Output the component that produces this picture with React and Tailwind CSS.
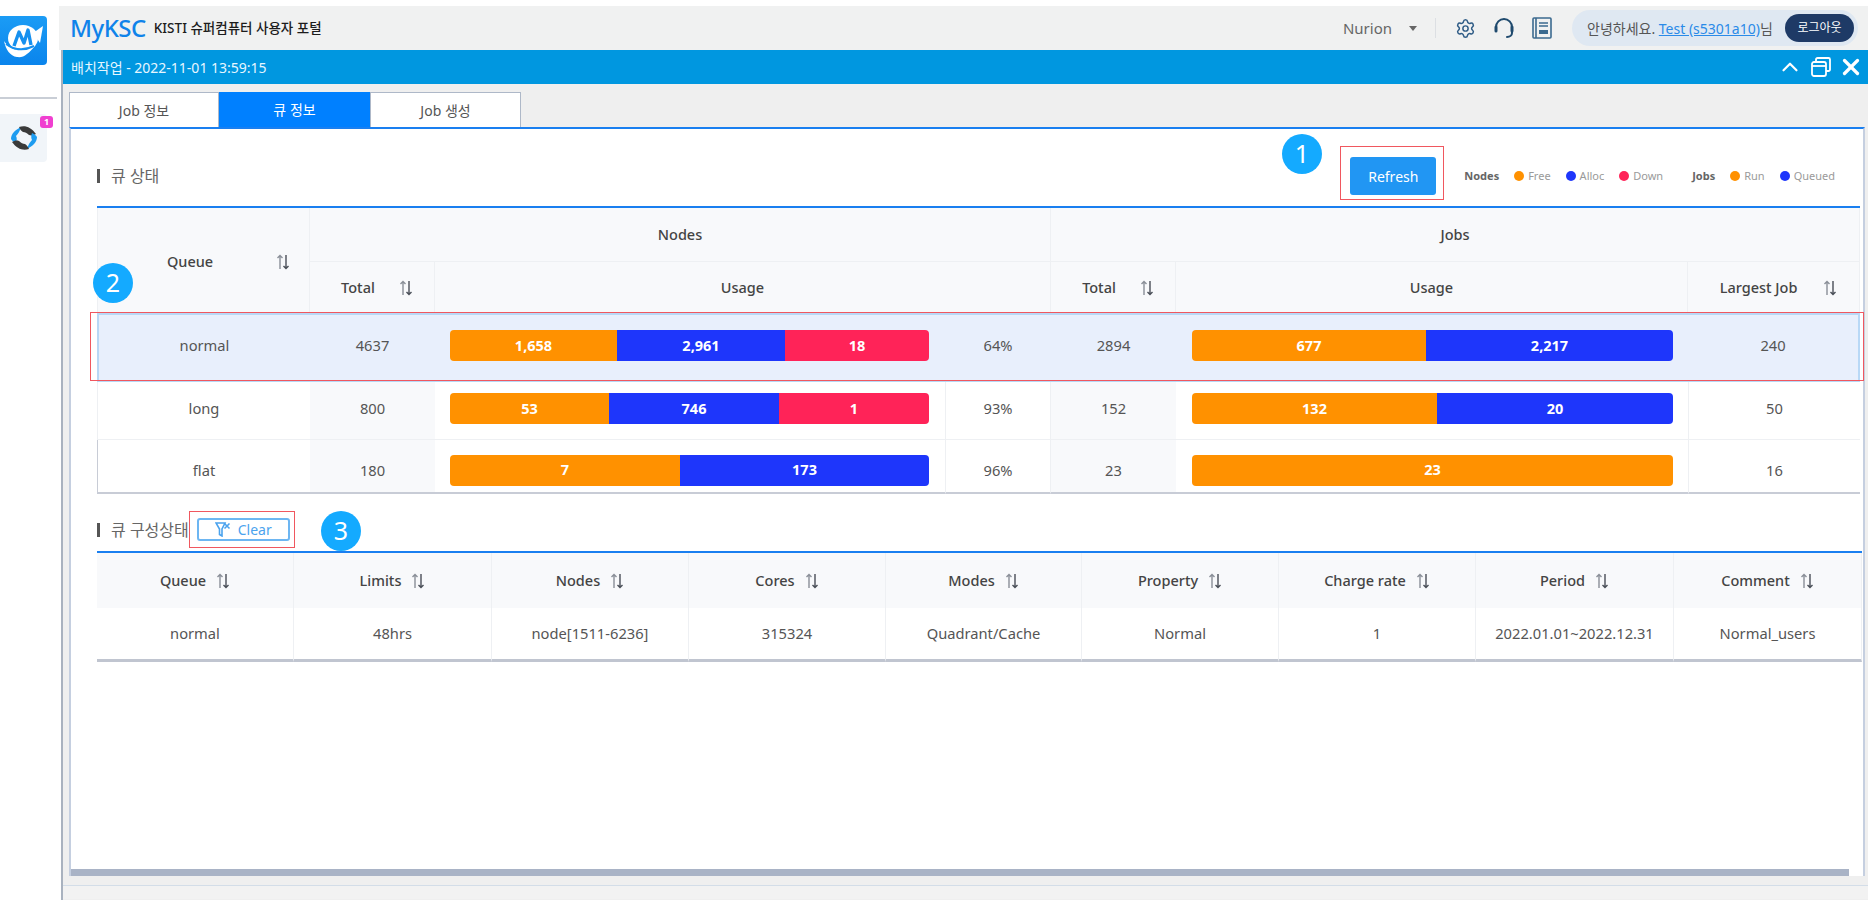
import { ChevronUp, X, Settings } from 'lucide-react'

const FONT = "font-['Noto_Sans','Noto_Sans_CJK_KR',sans-serif]"

const ORANGE = 'bg-[#ff9100]'
const BLUE = 'bg-[#1e36fb]'
const RED = 'bg-[#ff2358]'

const queues = [
  {
    name: 'normal', total: 4637, pct: '64%', jobs: 2894, largest: 240, selected: true,
    nodes: [['1,658', 167, ORANGE], ['2,961', 168, BLUE], ['18', 144, RED]],
    jobBars: [['677', 234, ORANGE], ['2,217', 247, BLUE]],
  },
  {
    name: 'long', total: 800, pct: '93%', jobs: 152, largest: 50,
    nodes: [['53', 159, ORANGE], ['746', 170, BLUE], ['1', 150, RED]],
    jobBars: [['132', 245, ORANGE], ['20', 236, BLUE]],
  },
  {
    name: 'flat', total: 180, pct: '96%', jobs: 23, largest: 16,
    nodes: [['7', 230, ORANGE], ['173', 249, BLUE]],
    jobBars: [['23', 481, ORANGE]],
  },
]

const configCols = ['Queue', 'Limits', 'Nodes', 'Cores', 'Modes', 'Property', 'Charge rate', 'Period', 'Comment']
const configRow = ['normal', '48hrs', 'node[1511-6236]', '315324', 'Quadrant/Cache', 'Normal', '1', '2022.01.01~2022.12.31', 'Normal_users']

function SortIcon({ className = '' }) {
  return (
    <svg width="14" height="16" viewBox="0 0 14 16" fill="none" strokeWidth="1.4" className={`inline-block ${className}`}>
      <path d="M4 15V1.5M1.5 4L4 1.5 6.5 4" stroke="#8a8f98" />
      <path d="M10 1v13.5M7.5 12l2.5 2.5 2.5-2.5" stroke="#4a4f58" />
    </svg>
  )
}

function Logo() {
  return (
    <div className="w-[47px] h-[49px] rounded-r-[4px] bg-gradient-to-b from-[#1b9cf5] to-[#0a84ec] flex items-center justify-center">
      <svg width="40" height="34" viewBox="0 0 40 34">
        <ellipse cx="19" cy="14" rx="15" ry="13" fill="#fff" />
        <path d="M29 9l10-7-3 17z" fill="#fff" />
        <path d="M10 22l5-14 5 11 4-13 3 15" fill="none" stroke="#1690ef" strokeWidth="3.4" strokeLinejoin="round" />
        <path d="M0 17c6 10 20 13 32 4-8 9-12 13-19 12C6 32 2 26 0 17z" fill="#fff" />
        <path d="M2 20c8 6 18 7 28 2" fill="none" stroke="#1690ef" strokeWidth="2" />
      </svg>
    </div>
  )
}

function TileIcon() {
  return (
    <svg width="28" height="28" viewBox="0 0 28 28">
      <path d="M1 15C1 10 5 6 11 3c-1 4-3 7-5 9 1 2 1 4 0 7-2-1-4-2-5-4z" fill="#1e9cf0" />
      <path d="M9 3c6-2 12 0 17 7-2 1-4 2-7 1-2-2-4-3-6-3-2-1-3-3-4-5z" fill="#3a3a3a" />
      <path d="M27 13c0 5-4 9-10 12 1-4 3-7 5-9-1-2-1-4 0-7 2 1 4 2 5 4z" fill="#1e9cf0" />
      <path d="M19 25c-6 2-12 0-17-7 2-1 4-2 7-1 2 2 4 3 6 3 2 1 3 3 4 5z" fill="#3a3a3a" />
    </svg>
  )
}

function Sidebar() {
  return (
    <aside className="w-[59px] shrink-0 pt-[16px]">
      <Logo />
      <div className="h-[2px] w-[57px] mt-[32px] bg-[#c9ced6]" />
      <div className="relative w-[47px] h-[48px] mt-[15px] bg-[#f1f5f9] rounded-r-[4px] flex items-center justify-center">
        <TileIcon />
        <span className="absolute top-[2px] right-[-6px] w-[13px] h-[12px] rounded-[3px] bg-[#f03fd0] text-white text-[9px] leading-[12px] text-center font-bold">1</span>
      </div>
    </aside>
  )
}

function Header() {
  return (
    <header className="h-[44px] bg-[#f0f1f1] flex items-center pl-[11px] pr-[10px]">
      <span className="text-[#0f83ea] text-[24px] font-medium tracking-[-0.5px] leading-none">MyKSC</span>
      <span className="ml-[8px] text-[13.5px] font-medium text-[#1c1c1c]">KISTI 슈퍼컴퓨터 사용자 포털</span>
      <div className="ml-auto flex items-center">
        <span className="text-[15px] text-[#666]">Nurion</span>
        <svg width="8" height="5" viewBox="0 0 8 5" className="ml-[17px]"><path d="M0 0h8L4 5z" fill="#666" /></svg>
        <span className="w-px h-[20px] bg-[#dcdfe3] ml-[18px]" />
        <Settings size={21} strokeWidth={1.7} className="ml-[19px] text-[#2f5c86]" />
        <svg width="22" height="22" viewBox="0 0 22 22" fill="none" className="ml-[17px]" stroke="#1f4a6e" strokeWidth="2" strokeLinecap="round">
          <path d="M3 14V10a8 8 0 0116 0v6c0 2-2 4-5 4" />
          <path d="M3 10v4" strokeWidth="3" />
          <path d="M19 10v4" strokeWidth="3" />
        </svg>
        <svg width="20" height="22" viewBox="0 0 20 22" fill="none" className="ml-[17px]" stroke="#3b6a8f" strokeWidth="1.6">
          <rect x="1" y="1" width="18" height="20" rx="1" />
          <path d="M4 1v20" />
          <path d="M7 6h9M7 9h9" />
          <rect x="7" y="13" width="9" height="4" fill="#3b6a8f" stroke="none" />
        </svg>
        <div className="ml-[20px] w-[286px] h-[36px] rounded-full bg-[#dfe8f2] flex items-center pl-[15px] pr-[4px] text-[14px] text-[#555]">
          <span>안녕하세요.&nbsp;</span>
          <span className="text-[#2a8ae8] underline">Test (s5301a10)</span>
          <span>님</span>
          <button className="ml-auto w-[69px] h-[28px] rounded-full bg-[#1e3a66] text-white text-[12px]">로그아웃</button>
        </div>
      </div>
    </header>
  )
}

function TitleBar() {
  return (
    <div className="h-[34px] bg-[#0097e0] flex items-center pl-[8px] pr-[4px] text-white">
      <span className="text-[14px] text-[#e6f6ff]">배치작업 - 2022-11-01 13:59:15</span>
      <div className="ml-auto flex items-center">
        <ChevronUp size={26} strokeWidth={2} />
        <svg width="20" height="20" viewBox="0 0 20 20" fill="none" stroke="#fff" strokeWidth="1.8" className="ml-[8px]">
          <rect x="1" y="5" width="14" height="14" rx="2" />
          <path d="M5 5V2.5A1.5 1.5 0 016.5 1h11A1.5 1.5 0 0119 2.5v10a1.5 1.5 0 01-1.5 1.5H15" />
          <path d="M1 9h14" />
        </svg>
        <X size={26} strokeWidth={3} className="ml-[7px]" />
      </div>
    </div>
  )
}

function Tabs() {
  return (
    <div className="flex ml-[6px] mt-[8px] h-[35px]">
      <div className="w-[150px] bg-white border border-b-0 border-[#aeb8c8] text-[14px] text-[#555] flex items-center justify-center">Job 정보</div>
      <div className="w-[151px] bg-[#0080ff] text-[14px] text-white flex items-center justify-center">큐 정보</div>
      <div className="w-[151px] bg-white border border-b-0 border-[#aeb8c8] text-[14px] text-[#555] flex items-center justify-center">Job 생성</div>
    </div>
  )
}

function SectionTitle({ children }) {
  return (
    <div className="flex items-center">
      <span className="w-[3px] h-[14px] bg-[#555]" />
      <span className="ml-[11px] text-[16px] text-[#666]">{children}</span>
    </div>
  )
}

function Legend({ color, label }) {
  return (
    <span className="flex items-center ml-[15px]">
      <span className={`w-[10px] h-[10px] rounded-full ${color}`} />
      <span className="ml-[4px] text-[11px] text-[#9a9a9a]">{label}</span>
    </span>
  )
}

function Bar({ segments }) {
  return (
    <div className="flex h-[31px] rounded-[4px] overflow-hidden">
      {segments.map(([label, width, color]) => (
        <div key={label + width} style={{ width }} className={`${color} text-white font-bold text-[14.5px] flex items-center justify-center`}>
          {label}
        </div>
      ))}
    </div>
  )
}

function QueueTable() {
  const th = 'bg-[#f8f9fb] border-r border-b border-[#eef0f3] text-[14.5px] font-medium text-[#444]'
  return (
    <table className="table-fixed border-separate border-spacing-0 w-[1763px] border-t-2 border-[#1a7ff0]">
      <colgroup>
        <col className="w-[213px]" />
        <col className="w-[125px]" />
        <col className="w-[510px]" />
        <col className="w-[106px]" />
        <col className="w-[125px]" />
        <col className="w-[512px]" />
        <col className="w-[172px]" />
      </colgroup>
      <thead>
        <tr className="h-[54px]">
          <th rowSpan={2} className={`${th} border-l pt-[3px]`}>
            <div className="flex items-center pl-[69px]">
              <span>Queue</span>
              <SortIcon className="ml-[63px]" />
            </div>
          </th>
          <th colSpan={3} className={th}>Nodes</th>
          <th colSpan={3} className={th}>Jobs</th>
        </tr>
        <tr className="h-[51px]">
          <th className={`${th} pl-[10px] pt-[2px]`}>Total<SortIcon className="ml-[24px] align-[-3px]" /></th>
          <th colSpan={2} className={`${th} pt-[2px]`}>Usage</th>
          <th className={`${th} pl-[10px] pt-[2px]`}>Total<SortIcon className="ml-[24px] align-[-3px]" /></th>
          <th className={`${th} pt-[2px]`}>Usage</th>
          <th className={`${th} pl-[10px] pt-[2px]`}>Largest Job<SortIcon className="ml-[26px] align-[-3px]" /></th>
        </tr>
      </thead>
      <tbody className="text-[14.7px] text-[#555] text-center">
        {queues.map((q) => {
          const last = q.name === 'flat'
          const rowCell = q.selected
            ? 'bg-[#e8effc] border-y-2 border-[#b8d8f6] pb-[4px]'
            : last
              ? 'border-b-2 border-[#c8ccd6] pt-[8px]'
              : 'border-b border-[#eef0f3] pb-[4px]'
          const shade = q.selected ? '' : 'bg-[#f8f9fb]'
          const height = q.selected ? 'h-[69px]' : last ? 'h-[54px]' : 'h-[58px]'
          return (
            <tr key={q.name} className={height}>
              <td className={`${rowCell} ${q.selected ? 'border-l-2' : 'border-l'}`}>{q.name}</td>
              <td className={`${rowCell} ${shade}`}>{q.total}</td>
              <td className={`${rowCell} pl-[15px] pr-[16px]`}><Bar segments={q.nodes} /></td>
              <td className={`${rowCell} ${q.selected ? '' : 'border-x border-x-[#eef0f3]'}`}>{q.pct}</td>
              <td className={`${rowCell} ${shade}`}>{q.jobs}</td>
              <td className={`${rowCell} pl-[16px] pr-[15px]`}><Bar segments={q.jobBars} /></td>
              <td className={`${rowCell} ${q.selected ? 'border-r-2' : 'border-l border-l-[#eef0f3]'}`}>{q.largest}</td>
            </tr>
          )
        })}
      </tbody>
    </table>
  )
}

function ConfigTable() {
  return (
    <table className="table-fixed border-separate border-spacing-0 w-[1765px] border-t-2 border-[#1a7ff0]">
      <colgroup>
        <col className="w-[197px]" />
        <col className="w-[198px]" />
        <col className="w-[197px]" />
        <col className="w-[197px]" />
        <col className="w-[196px]" />
        <col className="w-[197px]" />
        <col className="w-[197px]" />
        <col className="w-[198px]" />
        <col className="w-[188px]" />
      </colgroup>
      <thead>
        <tr className="h-[55px]">
          {configCols.map((c) => (
            <th key={c} className="bg-[#f8f9fb] border-r border-[#eef0f3] text-[14.5px] font-medium text-[#444]">
              {c}<SortIcon className="ml-[10px] align-[-3px]" />
            </th>
          ))}
        </tr>
      </thead>
      <tbody>
        <tr className="h-[54px]">
          {configRow.map((v) => (
            <td key={v} className="border-r border-b-[3px] border-r-[#eef0f3] border-b-[#c0c5d0] text-center text-[14.7px] text-[#555]">{v}</td>
          ))}
        </tr>
      </tbody>
    </table>
  )
}

function Callout({ className, children }) {
  return (
    <div className={`absolute w-[40px] h-[40px] rounded-full bg-[#14aaff] text-white text-[25px] flex items-center justify-center ${className}`}>
      {children}
    </div>
  )
}

export default function App() {
  return (
    <div className={`relative w-[1876px] h-[900px] overflow-hidden bg-white flex ${FONT}`}>
      <Sidebar />
      <main className="w-[1809px] pt-[6px] flex flex-col">
        <Header />
        <div className="ml-[2px] flex-1 flex flex-col border-l-2 border-[#a9b2bf] bg-[#efefef]">
          <TitleBar />
          <Tabs />
          <section className="ml-[6px] mr-[3px] h-[749px] flex flex-col bg-white border-t-2 border-x-2 border-t-[#1a7ff0] border-x-[#c5cfe0]">
            <div className="h-[77px] pt-[28px] pb-[11px] pl-[26px] pr-[28px] flex items-center">
              <SectionTitle>큐 상태</SectionTitle>
              <button className="ml-auto w-[86px] h-[38px] rounded-[3px] bg-[#2196f3] text-white text-[14px]">Refresh</button>
              <span className="ml-[28px] text-[11px] font-bold text-[#666]">Nodes</span>
              <Legend color="bg-[#ff9100]" label="Free" />
              <Legend color="bg-[#1e36fb]" label="Alloc" />
              <Legend color="bg-[#ff2358]" label="Down" />
              <span className="ml-[29px] text-[11px] font-bold text-[#666]">Jobs</span>
              <Legend color="bg-[#ff9100]" label="Run" />
              <Legend color="bg-[#1e36fb]" label="Queued" />
            </div>
            <div className="pl-[26px]"><QueueTable /></div>
            <div className="h-[57px] pt-[24px] pb-[10px] pl-[26px] flex items-center">
              <SectionTitle>큐 구성상태</SectionTitle>
              <button className="ml-[8px] w-[93px] h-[23px] rounded-[3px] border-2 border-[#6db6f2] text-[#4ba3ee] text-[14px] flex items-center justify-center bg-white">
                <svg width="16" height="15" viewBox="0 0 16 15" fill="none" stroke="#4ba3ee" strokeWidth="1.6">
                  <path d="M1 1h9L7 7v7L4.5 12.5V7z" />
                  <path d="M9.5 1.5l5 5M14.5 1.5l-5 5" />
                </svg>
                <span className="ml-[7px]">Clear</span>
              </button>
            </div>
            <div className="pl-[26px]"><ConfigTable /></div>
            <div className="mt-auto h-[7px] mr-[14px] bg-[#a9b3c6]" />
          </section>
          <div className="h-[14px] mt-[9px] bg-[#f2f2f2] border-t border-[#d3dde8]" />
        </div>
      </main>

      <div className="absolute left-[1340px] top-[146px] w-[104px] h-[54px] border border-[#f0575f]" />
      <div className="absolute left-[90px] top-[312px] w-[1774px] h-[69px] border border-[#f0575f]" />
      <div className="absolute left-[189px] top-[511px] w-[106px] h-[37px] border border-[#f0575f]" />
      <Callout className="left-[1282px] top-[134px]">1</Callout>
      <Callout className="left-[93px] top-[263px]">2</Callout>
      <Callout className="left-[321px] top-[511px]">3</Callout>
    </div>
  )
}
